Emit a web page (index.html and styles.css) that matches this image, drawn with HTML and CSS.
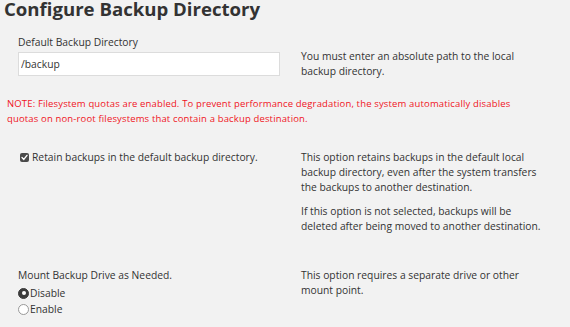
FILE: index.html
```html
<!DOCTYPE html>
<html lang="en">
<head>
    <meta charset="UTF-8">
    <title>Configure Backup Directory</title>
    <link rel="stylesheet" href="styles.css">
</head>
<body>
    <div class="page">
        <h1>Configure Backup Directory</h1>

        <!-- Default directory -->
        <div class="row row-dir">
            <div class="field">
                <label class="field-label">Default Backup Directory</label>
                <input class="text-input" type="text" value="/backup">
            </div>
            <p class="help">You must enter an absolute path to the local backup directory.</p>
        </div>

        <p class="note">NOTE: Filesystem quotas are enabled. To prevent performance degradation, the system automatically disables quotas on non-root filesystems that contain a backup destination.</p>

        <!-- Retain backups -->
        <div class="row row-retain">
            <div class="field">
                <label class="check">
                    <span class="checkbox">
                        <svg width="7" height="7" viewBox="0 0 7 7"><path d="M1 3.6 L2.8 5.4 L6 1.4" fill="none" stroke="#fff" stroke-width="1.4" stroke-linecap="round" stroke-linejoin="round"/></svg>
                    </span>
                    Retain backups in the default backup directory.
                </label>
            </div>
            <div class="help">
                <p>This option retains backups in the default local backup directory, even after the system transfers the backups to another destination.</p>
                <p>If this option is not selected, backups will be deleted after being moved to another destination.</p>
            </div>
        </div>

        <!-- Mount drive -->
        <div class="row row-mount">
            <div class="field">
                <div class="field-label">Mount Backup Drive as Needed.</div>
                <div class="radios">
                    <label class="radio-line"><span class="radio checked"></span>Disable</label>
                    <label class="radio-line"><span class="radio"></span>Enable</label>
                </div>
            </div>
            <p class="help">This option requires a separate drive or other mount point.</p>
        </div>
    </div>
</body>
</html>
```

FILE: styles.css
```css
* {
    margin: 0;
    padding: 0;
    box-sizing: border-box;
}

body {
    font-family: "Open Sans", sans-serif;
    font-size: 10.3px;
    line-height: 15px;
    background: #f2f2f2;
    color: #333;
    overflow: hidden;
}

.page {
    padding: 0 7px;
}

h1 {
    font-size: 18.6px;
    font-weight: 700;
    color: #333;
    line-height: 18px;
    margin-left: -3px;
}

.row {
    display: flex;
    gap: 22px;
}

.field {
    width: 272px;
    padding-left: 11px;
    flex-shrink: 0;
}

.help {
    width: 242px;
}

.help p + p {
    margin-top: 9px;
}

.row-dir {
    margin-top: 17px;
}

.row-dir .help {
    margin-top: 14px;
}

.field-label {
    display: block;
    margin-bottom: 2px;
}

.text-input {
    width: 262px;
    height: 24px;
    border: 1px solid #dcdcdc;
    background: #fff;
    font-family: inherit;
    font-size: 10.3px;
    color: #333;
    padding: 0 2px;
    outline: none;
}

.note {
    color: #f0141e;
    font-size: 9.5px;
    letter-spacing: 0.15px;
    max-width: 520px;
    margin-top: 17px;
}

.row-retain {
    margin-top: 24px;
}

.check {
    display: flex;
    align-items: center;
    gap: 3px;
    margin-left: 2px;
}

.checkbox {
    width: 9px;
    height: 9px;
    border-radius: 2px;
    background: #4a4a4a;
    display: flex;
    align-items: center;
    justify-content: center;
}

.row-mount {
    margin-top: 34px;
}

.radios {
    margin-top: 2px;
}

.radio-line {
    display: flex;
    align-items: center;
    gap: 1px;
    line-height: 16px;
}

.radio {
    width: 11px;
    height: 11px;
    border-radius: 50%;
    border: 1px solid #999;
    background: #fff;
    position: relative;
}

.radio.checked {
    background: #3c3c3c;
    border-color: #3c3c3c;
}

.radio.checked::after {
    content: "";
    position: absolute;
    left: 2.5px;
    top: 2.5px;
    width: 4px;
    height: 4px;
    border-radius: 50%;
    background: #fff;
}
```
